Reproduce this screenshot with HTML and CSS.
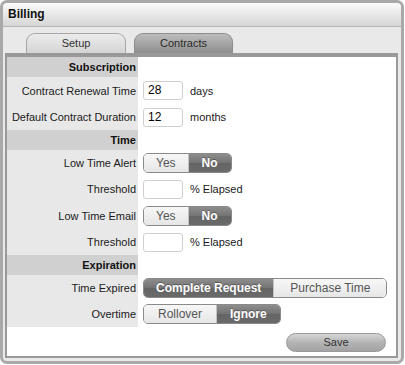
FILE: index.html
```html
<!DOCTYPE html>
<html>
<head>
<meta charset="utf-8">
<link rel="stylesheet" href="styles.css">
</head>
<body>
<div class="frame">
  <div class="titlebar">Billing</div>
  <div class="panel">
    <div class="tabs">
      <div class="tab tab-setup">Setup</div>
      <div class="tab tab-contracts">Contracts</div>
    </div>
    <div class="content">
      <div class="row head"><div class="label">Subscription</div><div class="value"></div></div>
      <div class="row first"><div class="label">Contract Renewal Time</div><div class="value"><span class="input">28</span><span class="unit">days</span></div></div>
      <div class="row"><div class="label">Default Contract Duration</div><div class="value"><span class="input">12</span><span class="unit">months</span></div></div>
      <div class="row head"><div class="label">Time</div><div class="value"></div></div>
      <div class="row"><div class="label">Low Time Alert</div><div class="value"><div class="seg"><span class="opt tight">Yes</span><span class="opt on">No</span></div></div></div>
      <div class="row"><div class="label">Threshold</div><div class="value"><span class="input"></span><span class="unit">% Elapsed</span></div></div>
      <div class="row tall"><div class="label">Low Time Email</div><div class="value"><div class="seg"><span class="opt tight">Yes</span><span class="opt on">No</span></div></div></div>
      <div class="row"><div class="label">Threshold</div><div class="value"><span class="input"></span><span class="unit">% Elapsed</span></div></div>
      <div class="row head"><div class="label">Expiration</div><div class="value"></div></div>
      <div class="row"><div class="label">Time Expired</div><div class="value"><div class="seg"><span class="opt on tight">Complete Request</span><span class="opt wide">Purchase Time</span></div></div></div>
      <div class="row"><div class="label">Overtime</div><div class="value"><div class="seg"><span class="opt loose">Rollover</span><span class="opt on">Ignore</span></div></div></div>
      <div class="footer"><div class="save">Save</div></div>
    </div>
  </div>
</div>
</body>
</html>
```
FILE: styles.css
```css
html, body {
  margin: 0;
  padding: 0;
  background: #ffffff;
}
body {
  font-family: "Liberation Sans", Arial, sans-serif;
  font-size: 11px;
  color: #1a1a1a;
}
.frame {
  width: 404px;
  height: 364px;
  box-sizing: border-box;
  border: 3px solid #a9a9a9;
  border-radius: 7px;
  background: #e9e9e9;
  display: flex;
  flex-direction: column;
  overflow: hidden;
}
.titlebar {
  height: 24px;
  box-sizing: border-box;
  border-bottom: 1px solid #b7b7b7;
  background: linear-gradient(#fbfbfb, #e6e6e6 55%, #d6d6d6);
  font-size: 12px;
  font-weight: bold;
  color: #111;
  padding: 4px 0 0 5px;
  border-radius: 4px 4px 0 0;
}
.panel {
  flex: 1;
  display: flex;
  flex-direction: column;
  padding: 6px 3px 3px 2px;
}
.tabs {
  display: flex;
  gap: 8px;
  padding-left: 21px;
  height: 20px;
}
.tab {
  width: 100px;
  box-sizing: border-box;
  border: 1px solid #a6a6a6;
  border-bottom: none;
  border-radius: 9px 9px 0 0;
  text-align: center;
  line-height: 19px;
  font-size: 11px;
  color: #333;
}
.tab-setup {
  background: linear-gradient(#ececec, #d4d4d4);
}
.tab-contracts {
  width: 99px;
  background: linear-gradient(#bdbdbd, #8e8e8e);
  border-color: #8d8d8d;
  color: #2a2a2a;
}
.content {
  flex: 1;
  background: #ffffff;
  border: 2px solid #999999;
  border-top-width: 4px;
  display: flex;
  flex-direction: column;
}
.row {
  display: flex;
  height: 26px;
}
.row.first, .row.tall {
  height: 27px;
}
.row.head {
  height: 20px;
}
.label {
  width: 131px;
  flex: none;
  box-sizing: border-box;
  background: #e8e8e8;
  text-align: right;
  padding-right: 2px;
  display: flex;
  align-items: center;
  justify-content: flex-end;
  white-space: nowrap;
}
.head .label {
  background: #d0d0d0;
  font-weight: bold;
  color: #111;
}
.value {
  flex: 1;
  display: flex;
  align-items: center;
  padding-left: 5px;
}
.input {
  width: 40px;
  height: 19px;
  box-sizing: border-box;
  border: 1px solid #cfcfcf;
  border-radius: 3px;
  background: #fff;
  font-size: 12px;
  line-height: 17px;
  padding-left: 4px;
  color: #000;
}
.unit {
  margin-left: 7px;
  font-size: 11px;
}
.seg {
  display: flex;
  height: 20px;
  box-sizing: border-box;
  border: 1px solid #c4c4c4;
  border-radius: 5px;
  overflow: hidden;
}
.opt {
  padding: 0 13px;
  font-size: 12px;
  line-height: 18px;
  color: #555;
  background: linear-gradient(#f7f7f7, #e6e6e6);
}
.opt.tight {
  padding: 0 12px;
}
.opt.loose {
  padding: 0 14px;
}
.opt.wide {
  padding: 0 16px;
}
.opt + .opt {
  border-left: 1px solid #c4c4c4;
}
.opt.on {
  color: #ffffff;
  font-weight: bold;
  background: linear-gradient(#8d8d8d, #737373 50%, #646464 51%, #6a6a6a);
  text-shadow: 0 -1px 0 rgba(0,0,0,0.3);
}
.seg:has(.on) {
  border-color: #8a8a8a;
}
.footer {
  flex: 1;
  display: flex;
  justify-content: flex-end;
  align-items: flex-start;
  padding: 6px 10px 0 0;
}
.save {
  width: 100px;
  height: 19px;
  border-radius: 10px;
  background: linear-gradient(#d6d6d6, #b4b4b4 50%, #a2a2a2);
  border: 1px solid #999;
  box-sizing: border-box;
  text-align: center;
  line-height: 17px;
  font-size: 11px;
  color: #333;
}
```
